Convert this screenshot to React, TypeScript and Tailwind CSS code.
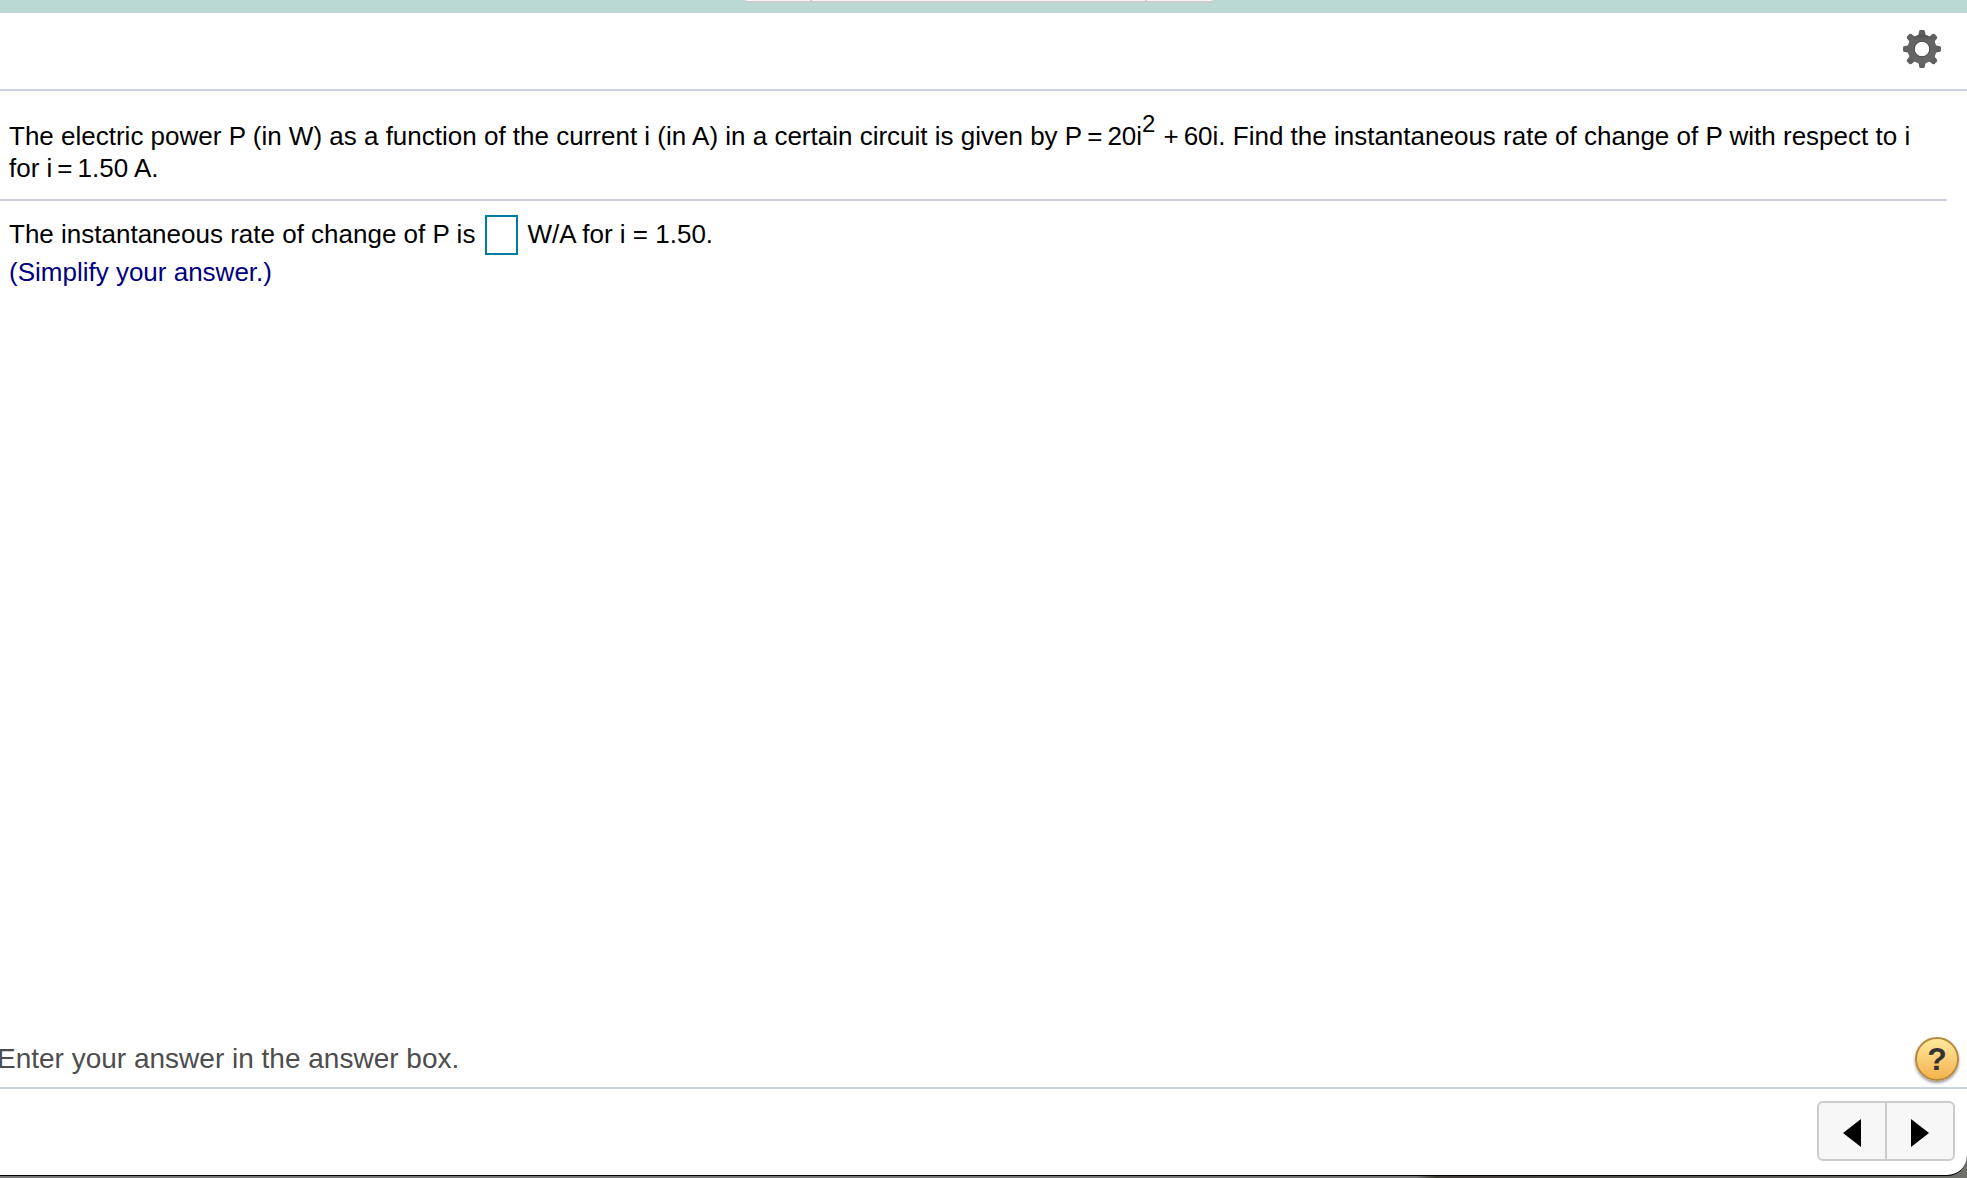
import { useState } from "react";

function GearIcon() {
  const teeth = [0, 45, 90, 135, 180, 225, 270, 315];

  return (
    <svg viewBox="-20 -20 40 40" className="size-10" aria-hidden="true">
      <defs>
        <linearGradient id="gear" x1="0" y1="0" x2="0" y2="1">
          <stop offset="0" stopColor="#505050" />
          <stop offset="0.2" stopColor="#646464" />
          <stop offset="1" stopColor="#666666" />
        </linearGradient>
      </defs>
      <g fill="#606060">
        {teeth.map((angle) => (
          <path
            key={angle}
            d={
              angle % 90 === 0
                ? "M-5.5 -12 Q-3 -14 -2.8 -18 Q-2.6 -19 -1.6 -19 H1.6 Q2.6 -19 2.8 -18 Q3 -14 5.5 -12Z"
                : "M-5 -12 Q-3 -14 -3.2 -18 L-2 -19.5 H2 L3.2 -18 Q3 -14 5 -12Z"
            }
            transform={`rotate(${angle})`}
          />
        ))}
      </g>
      <path
        fill="url(#gear)"
        fillRule="evenodd"
        d="M0 -14.5A14.5 14.5 0 1 1 0 14.5A14.5 14.5 0 1 1 0 -14.5ZM0 -7.5A7.5 7.5 0 1 0 0 7.5A7.5 7.5 0 1 0 0 -7.5Z"
      />
      <circle r="7.8" fill="none" stroke="#4a4a4a" strokeWidth="1" />
    </svg>
  );
}

function TopStrip() {
  return (
    <div className="flex h-[13px] shrink-0 items-start justify-center border-b border-[#c6cfdc] bg-[#bad9d3]">
      {/* lower edge of the tab group */}
      <div className="mr-[10px] flex h-[3px] w-[468px] rounded-b-sm border-b-2 border-[#cccccc] bg-[#f7f7f7]">
        <div className="w-[67px] border-r-2 border-[#cccccc]" />
        <div className="flex-1" />
        <div className="w-[68px] border-l-2 border-[#cccccc]" />
      </div>
    </div>
  );
}

function Question() {
  return (
    <section className="mr-5 border-b-2 border-[#ccd0de] pt-[29px] pr-5 pb-[15px] pl-[9px]">
      <p>
        The electric power P (in W) as a function of the current i (in A) in a
        certain circuit is given by P<span className="mx-[5px]">=</span>20i
        <sup className="relative -top-[13px] align-baseline text-[24px] leading-none">
          2
        </sup>
        <span className="mr-[5px] ml-[8px]">+</span>60i. Find the instantaneous
        rate of change of P with respect to i for i
        <span className="mx-[5px]">=</span>1.50 A.
      </p>
    </section>
  );
}

function Answer() {
  const [value, setValue] = useState("");

  return (
    <section className="pt-[14px] pl-[9px]">
      <div className="flex items-start leading-[38px]">
        <label htmlFor="answer">The instantaneous rate of change of P is</label>
        <input
          id="answer"
          type="text"
          value={value}
          onChange={(e) => setValue(e.target.value)}
          className="mr-[9px] ml-[10px] h-10 w-[33px] border-2 border-[#007c9e] bg-white text-center outline-none"
        />
        <span>W/A for i = 1.50.</span>
      </div>
      <p className="pt-px text-[#00007f]">(Simplify your answer.)</p>
    </section>
  );
}

function Footer() {
  return (
    <footer>
      <div className="flex items-center justify-between border-b-2 border-[#ccd3e0] pr-2 pb-[6px]">
        <p className="-ml-[3px] text-[28px] text-[#4d4d4d]">
          Enter your answer in the answer box.
        </p>
        <button
          type="button"
          aria-label="Help"
          className="flex size-11 items-center justify-center rounded-full border-2 border-[#b58a3b] bg-linear-to-b from-[#ffe99d] to-[#f3b24b] text-[32px] font-bold text-[#333333] shadow-[0_2px_3px_#999999]"
        >
          ?
        </button>
      </div>
      <nav className="flex justify-end pt-[12px] pr-3 pb-[14px]">
        <div className="flex h-[60px] w-[138px] divide-x-2 divide-[#cccccc] rounded-md border-2 border-[#cccccc] bg-[#f7f7f7]">
          <button
            type="button"
            aria-label="Previous"
            className="flex flex-1 items-center justify-center pt-[4px]"
          >
            <svg viewBox="0 0 18 28" className="h-7 w-[18px]">
              <path d="M18 0V28L0 14Z" />
            </svg>
          </button>
          <button
            type="button"
            aria-label="Next"
            className="flex flex-1 items-center justify-center pt-[4px]"
          >
            <svg viewBox="0 0 18 28" className="h-7 w-[18px]">
              <path d="M0 0V28L18 14Z" />
            </svg>
          </button>
        </div>
      </nav>
    </footer>
  );
}

export default function App() {
  return (
    <div className="flex min-h-screen flex-col bg-linear-to-r from-[#777777] from-72% via-[#3e3b35] via-73% to-[#70706c] pb-[2px] font-['Liberation_Sans',Arial,sans-serif] text-[26px] leading-8 text-black">
      <div className="flex flex-1 flex-col overflow-hidden rounded-br-[20px] border-b border-black bg-white">
        <TopStrip />
        <header className="flex h-[78px] shrink-0 items-center justify-end border-b-2 border-[#ccd0de] pr-[25px] pb-[4px]">
          <button type="button" aria-label="Settings">
            <GearIcon />
          </button>
        </header>
        <main className="flex-1">
          <Question />
          <Answer />
        </main>
        <Footer />
      </div>
    </div>
  );
}
